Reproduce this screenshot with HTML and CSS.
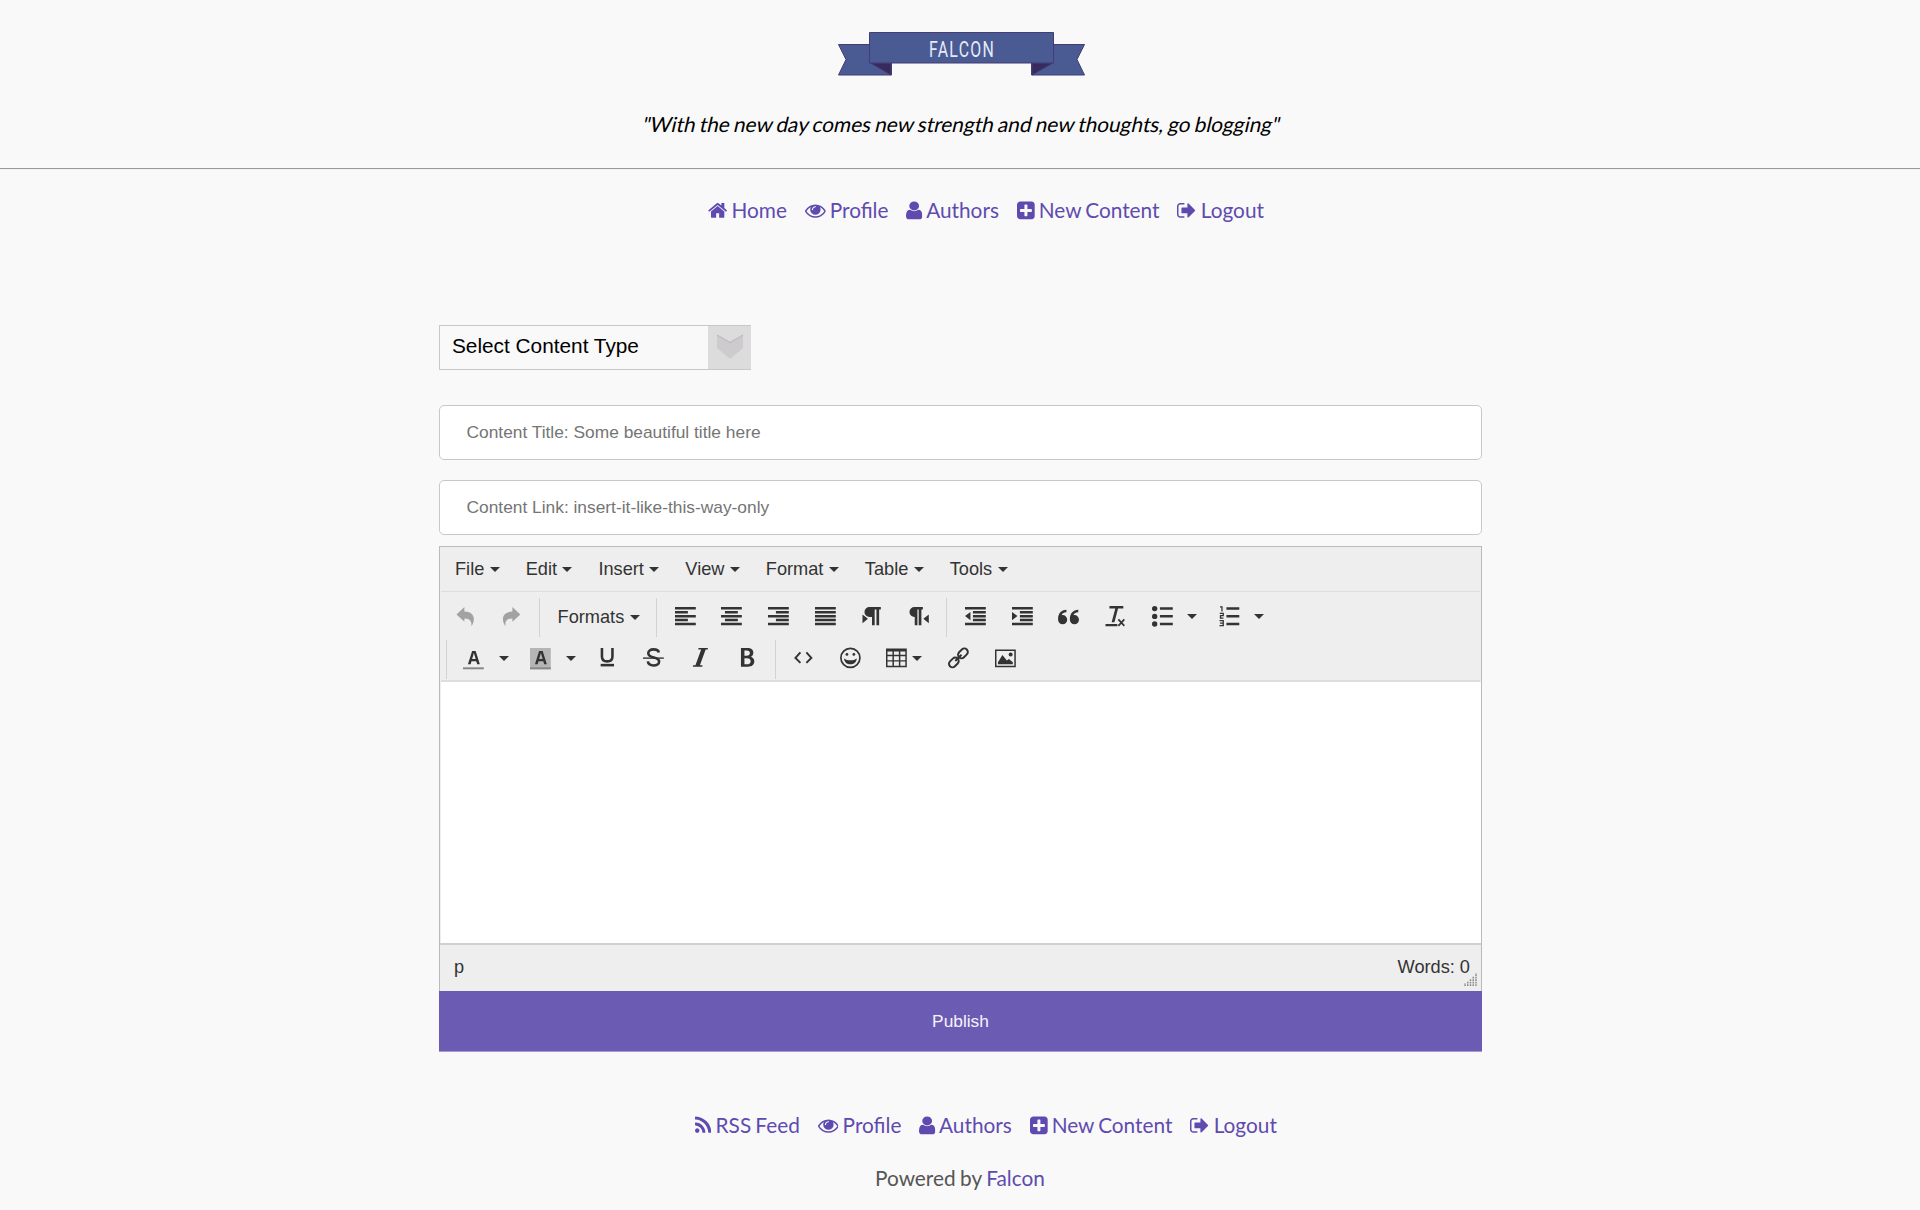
FILE: index.html
```html
<!DOCTYPE html>
<html lang="en">
<head>
<meta charset="utf-8">
<title>Falcon - New Content</title>
<link rel="stylesheet" href="styles.css">
</head>
<body>
<svg class="defs" width="0" height="0" aria-hidden="true">
  <symbol id="eye" viewBox="0 0 1792 1792"><path d="M1664 960q-152-236-381-353 61 104 61 225 0 185-131.5 316.5t-316.5 131.5-316.5-131.5-131.5-316.5q0-121 61-225-229 117-381 353 133 205 333.5 326.5t434.5 121.5 434.5-121.5 333.5-326.5zm-720-384q0-20-14-34t-34-14q-125 0-214.5 89.5t-89.5 214.5q0 20 14 34t34 14 34-14 14-34q0-86 61-147t147-61q20 0 34-14t14-34zm848 384q0 34-20 69-140 230-376.5 368.5t-499.5 138.5-499.5-139-376.5-368q-20-35-20-69t20-69q140-229 376.5-368t499.5-139 499.5 139 376.5 368q20 35 20 69z"/></symbol>
  <symbol id="user" viewBox="256 0 1280 1792" preserveAspectRatio="none"><path d="M1536 1399q0 109-62.5 187t-150.5 78h-854q-88 0-150.5-78t-62.5-187q0-85 8.5-160.5t31.5-152 58.5-131 94-89 134.5-34.5q131 128 313 128t313-128q76 0 134.5 34.5t94 89 58.5 131 31.5 152 8.5 160.5zm-256-887q0 159-112.5 271.5t-271.5 112.5-271.5-112.5-112.5-271.5 112.5-271.5 271.5-112.5 271.5 112.5 112.5 271.5z"/></symbol>
  <symbol id="plus" viewBox="128 0 1536 1792"><path d="M1408 960v-128q0-26-19-45t-45-19h-320v-320q0-26-19-45t-45-19h-128q-26 0-45 19t-19 45v320h-320q-26 0-45 19t-19 45v128q0 26 19 45t45 19h320v320q0 26 19 45t45 19h128q26 0 45-19t19-45v-320h320q26 0 45-19t19-45zm256-544v960q0 119-84.5 203.5t-203.5 84.5h-960q-119 0-203.5-84.5t-84.5-203.5v-960q0-119 84.5-203.5t203.5-84.5h960q119 0 203.5 84.5t84.5 203.5z"/></symbol>
  <symbol id="out" viewBox="64 0 1664 1792"><path d="M704 1440q0 4 1 20t.5 26.5-3 23.5-10 19.5-20.5 6.5h-320q-119 0-203.5-84.5t-84.5-203.5v-704q0-119 84.5-203.5t203.5-84.5h320q13 0 22.5 9.5t9.5 22.5q0 4 1 20t.5 26.5-3 23.5-10 19.5-20.5 6.5h-320q-66 0-113 47t-47 113v704q0 66 47 113t113 47h312l11.5 1 11.5 3 8 5.5 7 9 2 13.5zm928-544q0 26-19 45l-544 544q-19 19-45 19t-45-19-19-45v-288h-448q-26 0-45-19t-19-45v-384q0-26 19-45t45-19h448v-288q0-26 19-45t45-19 45 19l544 544q19 19 19 45z"/></symbol>
</svg>

<header class="header">
  <svg class="logo" viewBox="0 0 248 46" width="248" height="46">
    <g fill="#4a5b93" stroke="#453c75" stroke-width="1">
      <path d="M.5 12.500h53v30.500H.5L8 27.500z"/>
      <path d="M246.500 12.500h-53v30.500h53L239 27.500z"/>
      <path fill="#372b5e" d="M32.500 31h20.500v12z"/>
      <path fill="#372b5e" d="M215 31h-21v12z"/>
      <path d="M31.500.5h184v30.500h-184z"/>
    </g>
    <text class="logo-text" x="126.400" y="24.700" textLength="90" transform="scale(.72 1)">FALCON</text>
  </svg>
  <p class="tagline">"With the new day comes new strength and new thoughts, go blogging"</p>
</header>
<hr class="rule">

<ul class="nav">
  <li><a href="#"><svg class="fa w-1664" viewBox="64 0 1664 1792"><path d="M1472 992v480q0 26-19 45t-45 19h-384v-384h-256v384h-384q-26 0-45-19t-19-45v-480q0-1 .5-3t.5-3l575-474 575 474q1 2 1 6zm223-69l-62 74q-8 9-21 11h-3q-13 0-21-7l-692-577-692 577q-12 8-24 7-13-2-21-11l-62-74q-8-10-7-23.5t11-21.5l719-599q32-26 76-26t76 26l244 204v-195q0-14 9-23t23-9h192q14 0 23 9t9 23v408l219 182q10 8 11 21.5t-7 23.5z"/></svg> Home</a></li>
  <li><a href="#"><svg class="fa w-1792"><use href="#eye"/></svg> Profile</a></li>
  <li><a href="#"><svg class="fa w-user"><use href="#user"/></svg> Authors</a></li>
  <li><a href="#"><svg class="fa w-1536"><use href="#plus"/></svg> New Content</a></li>
  <li><a href="#"><svg class="fa w-1664"><use href="#out"/></svg> Logout</a></li>
</ul>

<main class="form">
  <div class="select">
    <span class="select-label">Select Content Type</span>
    <span class="select-arrow"><svg width="28" height="26" viewBox="0 0 28 26"><path d="M1 1l13 7.500L27 1v13L14 25 1 14z" fill="#cdcbcd"/><path d="M1 1l13 7.500L27 1" fill="none" stroke="#bfbdbf" stroke-width="1.300"/></svg></span>
  </div>
  <input class="field" type="text" placeholder="Content Title: Some beautiful title here">
  <input class="field" type="text" placeholder="Content Link: insert-it-like-this-way-only">

  <div class="editor">
    <div class="menubar">
      <span class="menu">File<i class="caret"></i></span>
      <span class="menu">Edit<i class="caret"></i></span>
      <span class="menu">Insert<i class="caret"></i></span>
      <span class="menu">View<i class="caret"></i></span>
      <span class="menu">Format<i class="caret"></i></span>
      <span class="menu">Table<i class="caret"></i></span>
      <span class="menu">Tools<i class="caret"></i></span>
    </div>
    <div class="toolbar">
      <div class="row">
        <span class="btn off"><svg class="ico" viewBox="0 0 21 21"><path d="M1.500 8.500L9.500 1v4.500c6 0 10 3.500 9.500 8.500-.2 2.500-1 4.500-2.500 6.500.8-5-1.500-8-7-8V16z"/></svg></span>
        <span class="btn off"><svg class="ico" viewBox="0 0 21 21"><path d="M19.500 8.500L11.500 1v4.500c-6 0-10 3.500-9.500 8.500.2 2.500 1 4.500 2.500 6.500-.8-5 1.500-8 7-8V16z"/></svg></span>
        <i class="sep"></i>
        <span class="formats">Formats<i class="caret"></i></span>
        <i class="sep"></i>
        <span class="btn"><svg class="ico" viewBox="0 0 21 21"><path d="M0 1h21v2.500H0zM0 5h13v2.500H0zM0 9h21v2.500H0zM0 13h13v2.500H0zM0 17h21v2.500H0z"/></svg></span>
        <span class="btn"><svg class="ico" viewBox="0 0 21 21"><path d="M0 1h21v2.500H0zM4 5h13v2.500H4zM0 9h21v2.500H0zM4 13h13v2.500H4zM0 17h21v2.500H0z"/></svg></span>
        <span class="btn"><svg class="ico" viewBox="0 0 21 21"><path d="M0 1h21v2.500H0zM8 5h13v2.500H8zM0 9h21v2.500H0zM8 13h13v2.500H8zM0 17h21v2.500H0z"/></svg></span>
        <span class="btn"><svg class="ico" viewBox="0 0 21 21"><path d="M0 1h21v2.500H0zM0 5h21v2.500H0zM0 9h21v2.500H0zM0 13h21v2.500H0zM0 17h21v2.500H0z"/></svg></span>
        <span class="btn"><svg class="ico" viewBox="0 0 21 21"><path d="M7.500 1H19v2.500h-1.700V19.500h-2.700V3.500h-1.800V19.500h-2.700V11H7.500a5 5 0 0 1 0-10zM.5 8.500L6 13 .5 17.500z"/></svg></span>
        <span class="btn"><svg class="ico" viewBox="0 0 21 21"><path d="M5.500 1H14v2.500h-1.500V19.500H9.800V3.500H8.500V19.500H5.800V11h-.3a5 5 0 0 1 0-10zM20 8.500L14.500 13l5.500 4.500z"/></svg></span>
        <i class="sep"></i>
        <span class="btn"><svg class="ico" viewBox="0 0 21 21"><path d="M0 1h21v2.500H0zM8 5h13v2.500H8zM8 9h13v2.500H8zM8 13h13v2.500H8zM0 17h21v2.500H0zM5.500 6v8.500L0 10.200z"/></svg></span>
        <span class="btn"><svg class="ico" viewBox="0 0 21 21"><path d="M0 1h21v2.500H0zM8 5h13v2.500H8zM8 9h13v2.500H8zM8 13h13v2.500H8zM0 17h21v2.500H0zM0 6v8.500l5.500-4.300z"/></svg></span>
        <span class="btn"><svg class="ico" viewBox="0 0 21 21"><path d="M4.700 9.200a4.600 4.600 0 1 1-4.600 4.600C-.2 8 3 4 8.500 3.800v2.500C5.500 6.500 4.200 7.500 3.700 9.200zM16.600 9.200a4.600 4.600 0 1 1-4.600 4.600C11.700 8 15 4 20.500 3.800v2.500c-3 .2-4.300 1.200-4.800 2.900z"/></svg></span>
        <span class="btn"><svg class="ico" viewBox="0 0 21 21"><path d="M4.500 0h14v2.500h-5.300L9.500 16.500H6.700L10.400 2.500H4.500zM.5 18.300h12v2.200H.5z"/><path d="M13.500 13.500l6 6.500m0-6.500l-6 6.500" fill="none" stroke="#333" stroke-width="1.700"/></svg></span>
        <span class="btn"><svg class="ico" viewBox="0 0 21 21"><path d="M8 1.300h13v2.500H8zM8 9.200h13v2.500H8zM8 17h13v2.500H8z"/><circle cx="2.700" cy="2.600" r="2.700"/><circle cx="2.700" cy="10.500" r="2.700"/><circle cx="2.700" cy="18.200" r="2.700"/></svg></span>
        <span class="open"><i class="caret"></i></span>
        <span class="btn"><svg class="ico" viewBox="0 0 21 21"><path d="M7.500 1.300h13v2.500h-13zM7.500 9.200h13v2.500h-13zM7.500 17h13v2.500h-13z"/><path d="M1 .8h2v4.800M.8 7.500h3.500v2.300H1.500v2.500h3M.5 14.700h3.800v5.100H.5M1 17.200h3" fill="none" stroke="#333" stroke-width="1.300"/></svg></span>
        <span class="open"><i class="caret"></i></span>
      </div>
      <div class="row row-format">
        <i class="sep"></i>
        <span class="btn"><svg class="ico" viewBox="0 0 21 21"><path d="M5 16.500L9.200 3h3.600L17 16.500h-2.700l-.9-3.200H8.600l-.9 3.200zM9.200 11.200h3.600L11 5z" fill-rule="evenodd"/><path d="M0 19.500h21v2H0z" fill="#888"/></svg></span>
        <span class="open"><i class="caret"></i></span>
        <span class="btn"><svg class="ico" viewBox="0 0 21 21"><path d="M0 0h21v21.500H0z" fill="#b5b5b5"/><path d="M5 16.500L9.200 3h3.600L17 16.500h-2.700l-.9-3.200H8.600l-.9 3.200zM9.200 11.200h3.600L11 5z" fill-rule="evenodd"/><path d="M0 19.500h21v2H0z" fill="#888"/></svg></span>
        <span class="open"><i class="caret"></i></span>
        <span class="btn"><svg class="ico" viewBox="0 0 21 21"><path d="M5 0v8.500q0 5 5.300 5t5.300-5V0" fill="none" stroke="#333" stroke-width="2.600"/><path d="M3.700 16h13.500v2.600H3.700z"/></svg></span>
        <span class="btn"><svg class="ico" viewBox="0 0 21 21"><path d="M16 4.600C15.600 2.500 13.500 1.400 10.500 1.400 7.500 1.400 5.300 3 5.300 5.300c0 5.500 11 3.200 11 8.300 0 2.500-2.500 4-5.600 4-3.400 0-5.500-1.500-5.800-4" fill="none" stroke="#333" stroke-width="2.600"/><path d="M0 9.500h21v1.400H0z"/></svg></span>
        <span class="btn"><svg class="ico" viewBox="0 0 21 21"><path d="M8.500 0H18v1.500h-2.200L10 17.500h2.500V19H3v-1.500h2.500L11.300 1.500H8.500z"/></svg></span>
        <span class="btn"><svg class="ico" viewBox="0 0 21 21"><path d="M4 0h6.500c4 0 6 1.700 6 4.800 0 2-1 3.400-2.600 4.100 2.200.6 3.600 2.300 3.600 4.600 0 3.500-2.500 5.500-6.500 5.500H4zM7.500 2.500v5.200h2c2.500 0 3.500-.9 3.500-2.600s-1-2.600-3.300-2.600zM7.500 10.300v6.200h2.500c2.500 0 3.800-1 3.800-3.100s-1.300-3.100-3.900-3.100z" fill-rule="evenodd"/></svg></span>
        <i class="sep"></i>
        <span class="btn"><svg class="ico" viewBox="0 0 21 21"><path d="M7.500 4.500L2.500 10l5 5M13.500 4.500l5 5.500-5 5" fill="none" stroke="#333" stroke-width="2"/></svg></span>
        <span class="btn"><svg class="ico" viewBox="0 0 21 21"><circle cx="10.500" cy="10" r="9.600" fill="none" stroke="#333" stroke-width="1.700"/><circle cx="7" cy="6.500" r="1.400"/><circle cx="14" cy="6.500" r="1.400"/><path d="M4 10.500c3.500 2.500 9.500 2.500 13 0-.5 4-3 6-6.500 6s-6-2-6.500-6z"/></svg></span>
        <span class="table-btn"><svg class="ico" viewBox="0 0 21 21"><path d="M0 .5h21V19.500H0zM1.500 3.500v3.400h5V3.500zM8 3.500v3.400h5V3.500zM14.500 3.500v3.400h5V3.500zM1.500 8.300v4h5v-4zM8 8.300v4h5v-4zM14.500 8.300v4h5v-4zM1.500 13.700v4.200h5v-4.200zM8 13.700v4.200h5v-4.200zM14.500 13.700v4.200h5v-4.200z" fill-rule="evenodd"/></svg><i class="caret"></i></span>
        <span class="btn"><svg class="ico" viewBox="0 0 21 21"><g fill="none" stroke="#333" stroke-width="2" transform="rotate(-45 10.500 10)"><rect x="-1.500" y="6.500" width="11" height="7" rx="3.500"/><rect x="11.500" y="6.500" width="11" height="7" rx="3.500"/><path d="M6 10h9"/></g></svg></span>
        <span class="btn"><svg class="ico" viewBox="0 0 21 21"><path d="M0 1.500h21v18H0zM1.500 3v15h18V3z" fill-rule="evenodd"/><path d="M3 16.500v-2L7.500 7l4.500 5.500 2-1.500 4 3.500v2z"/><circle cx="15.800" cy="6.500" r="2"/></svg></span>
      </div>
    </div>
    <div class="canvas"></div>
    <div class="status"><span>p</span><span class="words">Words: 0</span>
      <svg class="grip" width="13" height="13" viewBox="0 0 13 13"><path d="M1 13v-3M3.750 13V8M6.500 13V5.500M9.250 13V3M12 13V0" stroke="#8a8a8a" stroke-width="1.500" stroke-dasharray="1.700 .8"/></svg>
    </div>
  </div>
  <button class="publish" type="button">Publish</button>
</main>

<footer>
  <ul class="nav">
    <li><a href="#"><svg class="fa w-1408" viewBox="192 0 1408 1792"><path d="M576 1344q0 80-56 136t-136 56-136-56-56-136 56-136 136-56 136 56 56 136zm512 123q2 28-17 48-18 21-47 21h-135q-25 0-43-16.500t-20-41.500q-22-229-184.500-391.500t-391.500-184.500q-25-2-41.500-20t-16.500-43v-135q0-29 21-47 17-17 43-17h5q160 13 306 80.500t259 181.500q114 113 181.500 259t80.500 306zm512 2q2 27-18 47-18 20-46 20h-143q-26 0-44.500-17.500t-19.500-42.500q-12-215-101-408.500t-231.500-336-336-231.500-408.500-102q-25-1-42.500-19.500t-17.500-43.500v-143q0-28 20-46 18-18 44-18h3q262 13 501.500 120t425.500 294q187 186 294 425.500t120 501.500z"/></svg> RSS Feed</a></li>
    <li><a href="#"><svg class="fa w-1792"><use href="#eye"/></svg> Profile</a></li>
    <li><a href="#"><svg class="fa w-user"><use href="#user"/></svg> Authors</a></li>
    <li><a href="#"><svg class="fa w-1536"><use href="#plus"/></svg> New Content</a></li>
    <li><a href="#"><svg class="fa w-1664"><use href="#out"/></svg> Logout</a></li>
  </ul>
  <p class="powered">Powered by <a href="#">Falcon</a></p>
</footer>
</body>
</html>
```
FILE: styles.css
```css
* { box-sizing: border-box; }
html { overflow: hidden; }
body {
  margin: 0;
  height: 1210px;
  background: #f9f9f9;
  color: #000;
  font: 20.8px/26px Lato, sans-serif;
}
a { color: #5f4baf; text-decoration: none; }
.defs { display: block; }

.header {
  display: flex;
  flex-direction: column;
  align-items: center;
  height: 168px;
  padding: 32px 0 0 4px;
}
.logo { display: block; }
.logo-text { fill: #e6e9f7; font: 22px Roboto, sans-serif; }
.tagline { margin: 33px 0 0; word-spacing: -1.2px; transform: skewX(-13deg); }
.rule {
  margin: 0;
  height: 2px;
  border: 0;
  border-top: 1px solid #9a9a9a;
  border-bottom: 1px solid #f2f2f2;
}

.nav {
  display: flex;
  justify-content: center;
  gap: 17.9px;
  margin: 0;
  padding: 27px 0 0 52px;
  height: 155px;
  list-style: none;
  word-spacing: -1.2px;
}
.fa { height: 20.8px; vertical-align: -3px; fill: currentColor; }
.w-user { width: 16.34px; }
.w-1408 { width: 16.34px; }
.w-1536 { width: 17.83px; }
.w-1664 { width: 19.31px; }
.w-1792 { width: 20.8px; }

.form {
  display: flex;
  flex-direction: column;
  width: 1043px;
  margin: 0 auto;
  position: relative;
  left: .5px;
  font-family: "Liberation Sans", Arial, sans-serif;
}
.select {
  display: flex;
  justify-content: space-between;
  width: 312px;
  height: 45px;
  margin-bottom: 35px;
  border: 1px solid #c8c8c8;
  border-right: 0;
}
.select-label { padding: 7px 0 0 12px; }
.select-arrow {
  display: flex;
  justify-content: center;
  width: 43px;
  padding-top: 8px;
  background: #dcdcdc;
}
.field {
  height: 55px;
  margin: 0 0 20px;
  padding: 0 26.5px;
  border: 1px solid #c8c8c8;
  border-radius: 5px;
  background: #fff;
  font: 17.35px "Liberation Sans", Arial, sans-serif;
}
.field::placeholder { color: #757575; }
.field + .editor { margin-top: -9px; }

.editor {
  display: flex;
  flex-direction: column;
  height: 445px;
  border: 1px solid #bababa;
  border-bottom: 0;
  background: #eee;
  color: #333;
  font-size: 18.2px;
}
.menubar {
  display: flex;
  align-items: center;
  gap: 26px;
  height: 45px;
  margin: 0 1px;
  padding-left: 14px;
  border-bottom: 1px solid #ddd;
}
.menu, .formats { display: flex; align-items: center; }
.caret {
  width: 0;
  margin-left: 5.400px;
  border: 5.200px solid transparent;
  border-top-color: #333;
  border-bottom: 0;
}
.toolbar {
  height: 90px;
  margin: 0 1px;
  padding-top: 4px;
  border-bottom: 2px solid #ddd;
}
.row { display: flex; align-items: center; height: 42px; padding-left: .6px; }
.btn { display: flex; justify-content: center; width: 46.800px; }
.off { opacity: .4; }
.ico { width: 20.800px; height: 20.800px; margin-bottom: 2px; fill: #333; overflow: visible; }
.sep { width: 1px; height: 39px; margin: 0 4.400px 0 4px; background: #d2d2d2; }
.row-format .sep { margin: 0 4.200px 0 3.800px; }
.row-format .sep:first-child { margin: 0 3.600px 0 4px; }
.formats { width: 107.600px; padding-left: 13px; }
.open { width: 19.900px; padding: 0 0 2px 1.500px; }
.row-format .open { padding-left: 2px; }
.open .caret { display: block; margin: 0; }
.table-btn { display: flex; align-items: center; width: 61.900px; padding-left: 12.500px; }
.canvas { flex: 1; margin-left: 1px; background: #fff; }
.status {
  display: flex;
  justify-content: space-between;
  height: 48px;
  padding: 9px 11px 0 14px;
  border-top: 2px solid #d0d0d0;
  position: relative;
}
.grip { position: absolute; right: 4px; bottom: 5px; }
.publish {
  height: 61px;
  padding: 1px 0 0;
  border: 0;
  border-bottom: 1px solid #a59bd0;
  background: #6b5bb3;
  color: #f5f3fb;
  font: 17.33px "Liberation Sans", Arial, sans-serif;
}

footer .nav { height: 113px; padding-top: 60px; }
.powered { margin: 0; word-spacing: -.8px; text-align: center; color: #555; }
```
